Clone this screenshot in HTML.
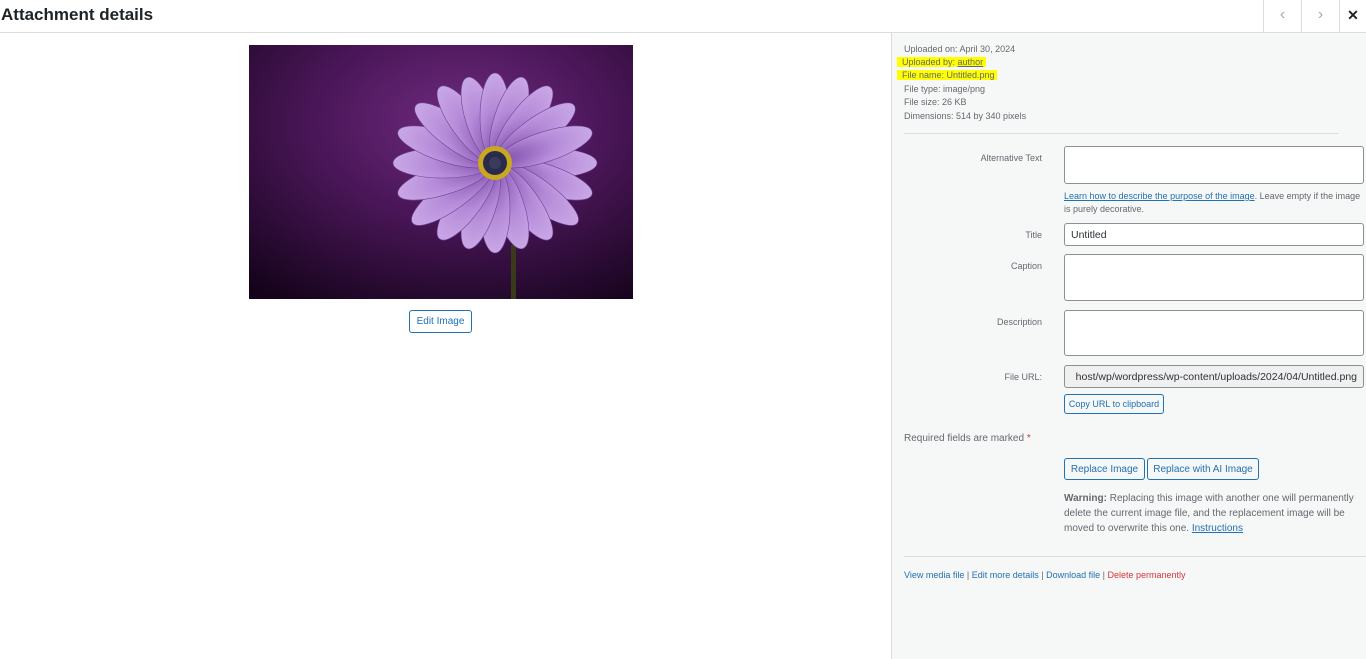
<!DOCTYPE html>
<html><head><meta charset="utf-8"><style>
*{box-sizing:border-box}
body{margin:0;width:1366px;height:659px;overflow:hidden;background:#fff;font-family:"Liberation Sans",sans-serif;color:#50575e;position:relative}
.hdr{position:absolute;left:0;top:0;width:1366px;height:33px;border-bottom:1px solid #dcdcde;background:#fff}
.hdr h1{margin:0;position:absolute;left:1px;top:5px;font-size:17px;font-weight:600;color:#1d2327}
.nb{position:absolute;top:0;height:32px;border-left:1px solid #dcdcde;color:#a7aaad;text-align:center;line-height:30px;font-size:16px}
.side{position:absolute;left:891px;top:33px;width:475px;height:626px;background:#f6f7f7;border-left:1px solid #dcdcde}
.s{position:absolute;font-size:9px;color:#646970;white-space:nowrap}
.hl{background:#ffff00}
.lbl{position:absolute;font-size:9px;color:#646970;text-align:right;width:140px;left:902px}
.inp{position:absolute;left:1064px;width:300px;background:#fff;border:1px solid #8c8f94;border-radius:3px}
.btn{position:absolute;border:1px solid #2271b1;color:#2271b1;border-radius:3px;background:#f6f7f7;font-size:10px;text-align:center}
a{color:#2271b1}
</style></head><body>
<div class="hdr"><h1>Attachment details</h1>
<div class="nb" style="left:1263px;width:38px">&#8249;</div>
<div class="nb" style="left:1301px;width:38px">&#8250;</div>
<div class="nb" style="left:1339px;width:27px;color:#1d2327;font-size:14px;font-weight:bold">&#10005;</div>
</div>
<svg style="position:absolute;left:249px;top:45px" width="384" height="254" viewBox="0 0 384 254">
<defs><radialGradient id="bg" cx="0.55" cy="0.3" r="0.85"><stop offset="0" stop-color="#6e2a7e"/><stop offset="0.45" stop-color="#4a1658"/><stop offset="1" stop-color="#14031a"/></radialGradient>
<radialGradient id="pt" cx="0" cy="0.5" r="1"><stop offset="0" stop-color="#7c4aa8"/><stop offset="0.6" stop-color="#b58ad8"/><stop offset="1" stop-color="#c9a8e6"/></radialGradient></defs>
<rect width="384" height="254" fill="url(#bg)"/>
<rect x="262" y="200" width="5" height="54" fill="#3a3a1a"/>
<g transform="translate(246,118)">
<g fill="url(#pt)" stroke="#6e4498" stroke-width="0.6" id="p">
<ellipse cx="52" cy="0" rx="50" ry="15" transform="rotate(0)"/><ellipse cx="52" cy="0" rx="50" ry="15" transform="rotate(18)"/><ellipse cx="52" cy="0" rx="50" ry="15" transform="rotate(36)"/><ellipse cx="48" cy="0" rx="46" ry="15" transform="rotate(54)"/><ellipse cx="46" cy="0" rx="44" ry="15" transform="rotate(72)"/><ellipse cx="46" cy="0" rx="44" ry="15" transform="rotate(90)"/><ellipse cx="46" cy="0" rx="44" ry="15" transform="rotate(108)"/><ellipse cx="48" cy="0" rx="46" ry="15" transform="rotate(126)"/><ellipse cx="52" cy="0" rx="50" ry="15" transform="rotate(144)"/><ellipse cx="52" cy="0" rx="50" ry="15" transform="rotate(162)"/><ellipse cx="52" cy="0" rx="50" ry="15" transform="rotate(180)"/><ellipse cx="52" cy="0" rx="50" ry="15" transform="rotate(198)"/><ellipse cx="50" cy="0" rx="48" ry="15" transform="rotate(216)"/><ellipse cx="48" cy="0" rx="46" ry="15" transform="rotate(234)"/><ellipse cx="46" cy="0" rx="44" ry="15" transform="rotate(252)"/><ellipse cx="46" cy="0" rx="44" ry="15" transform="rotate(270)"/><ellipse cx="46" cy="0" rx="44" ry="15" transform="rotate(288)"/><ellipse cx="48" cy="0" rx="46" ry="15" transform="rotate(306)"/><ellipse cx="50" cy="0" rx="48" ry="15" transform="rotate(324)"/><ellipse cx="52" cy="0" rx="50" ry="15" transform="rotate(342)"/>
</g>
<circle r="17" fill="#c8a820"/><circle r="12" fill="#2a2a4a"/><circle r="6" fill="#3a3a5a"/></g>
</svg>
<div class="btn" style="left:409px;top:310px;width:63px;height:23px;line-height:22px;background:#fff">Edit Image</div>
<div class="side"></div>
<div class="s" style="left:904px;top:44px">Uploaded on: April 30, 2024</div>
<div class="s" style="left:897px;top:57px"><span class="hl">&nbsp;&nbsp;Uploaded by: <u>author</u>&nbsp;</span></div>
<div class="s" style="left:897px;top:70px"><span class="hl">&nbsp;&nbsp;File name: Untitled.png&nbsp;</span></div>
<div class="s" style="left:904px;top:84px">File type: image/png</div>
<div class="s" style="left:904px;top:97px">File size: 26 KB</div>
<div class="s" style="left:904px;top:111px">Dimensions: 514 by 340 pixels</div>
<div style="position:absolute;left:904px;top:133px;width:435px;border-top:1px solid #dcdcde"></div>
<div class="lbl" style="top:153px">Alternative Text</div>
<div class="inp" style="top:146px;height:38px"></div>
<div class="s" style="left:1064px;top:190px;line-height:13px;white-space:normal;width:300px"><a href="#">Learn how to describe the purpose of the image</a>. Leave empty if the image is purely decorative.</div>
<div class="lbl" style="top:230px">Title</div>
<div class="inp" style="top:223px;height:23px;font-size:10.5px;color:#2c3338;padding:5px 6px">Untitled</div>
<div class="lbl" style="top:261px">Caption</div>
<div class="inp" style="top:254px;height:47px"></div>
<div class="lbl" style="top:317px">Description</div>
<div class="inp" style="top:310px;height:46px"></div>
<div class="lbl" style="top:372px">File URL:</div>
<div class="inp" style="top:365px;height:23px;background:#f0f0f1;font-size:10.5px;color:#2c3338;padding:5px 6px;overflow:hidden;white-space:nowrap;text-align:right">host/wp/wordpress/wp-content/uploads/2024/04/Untitled.png</div>
<div class="btn" style="left:1064px;top:394px;width:100px;height:20px;line-height:19px;font-size:9px">Copy URL to clipboard</div>
<div class="s" style="left:904px;top:433px;font-size:10px">Required fields are marked <span style="color:#d63638">*</span></div>
<div class="btn" style="left:1064px;top:458px;width:81px;height:22px;line-height:21px">Replace Image</div>
<div class="btn" style="left:1147px;top:458px;width:112px;height:22px;line-height:21px">Replace with AI Image</div>
<div class="s" style="left:1064px;top:491px;width:300px;white-space:normal;line-height:15px;font-size:10px"><b>Warning:</b> Replacing this image with another one will permanently delete the current image file, and the replacement image will be moved to overwrite this one. <a href="#">Instructions</a></div>
<div style="position:absolute;left:904px;top:556px;width:462px;border-top:1px solid #dcdcde"></div>
<div class="s" style="left:904px;top:570px"><span style="color:#2271b1">View media file</span> | <span style="color:#2271b1">Edit more details</span> | <span style="color:#2271b1">Download file</span> | <span style="color:#d63638">Delete permanently</span></div>
</body></html>
